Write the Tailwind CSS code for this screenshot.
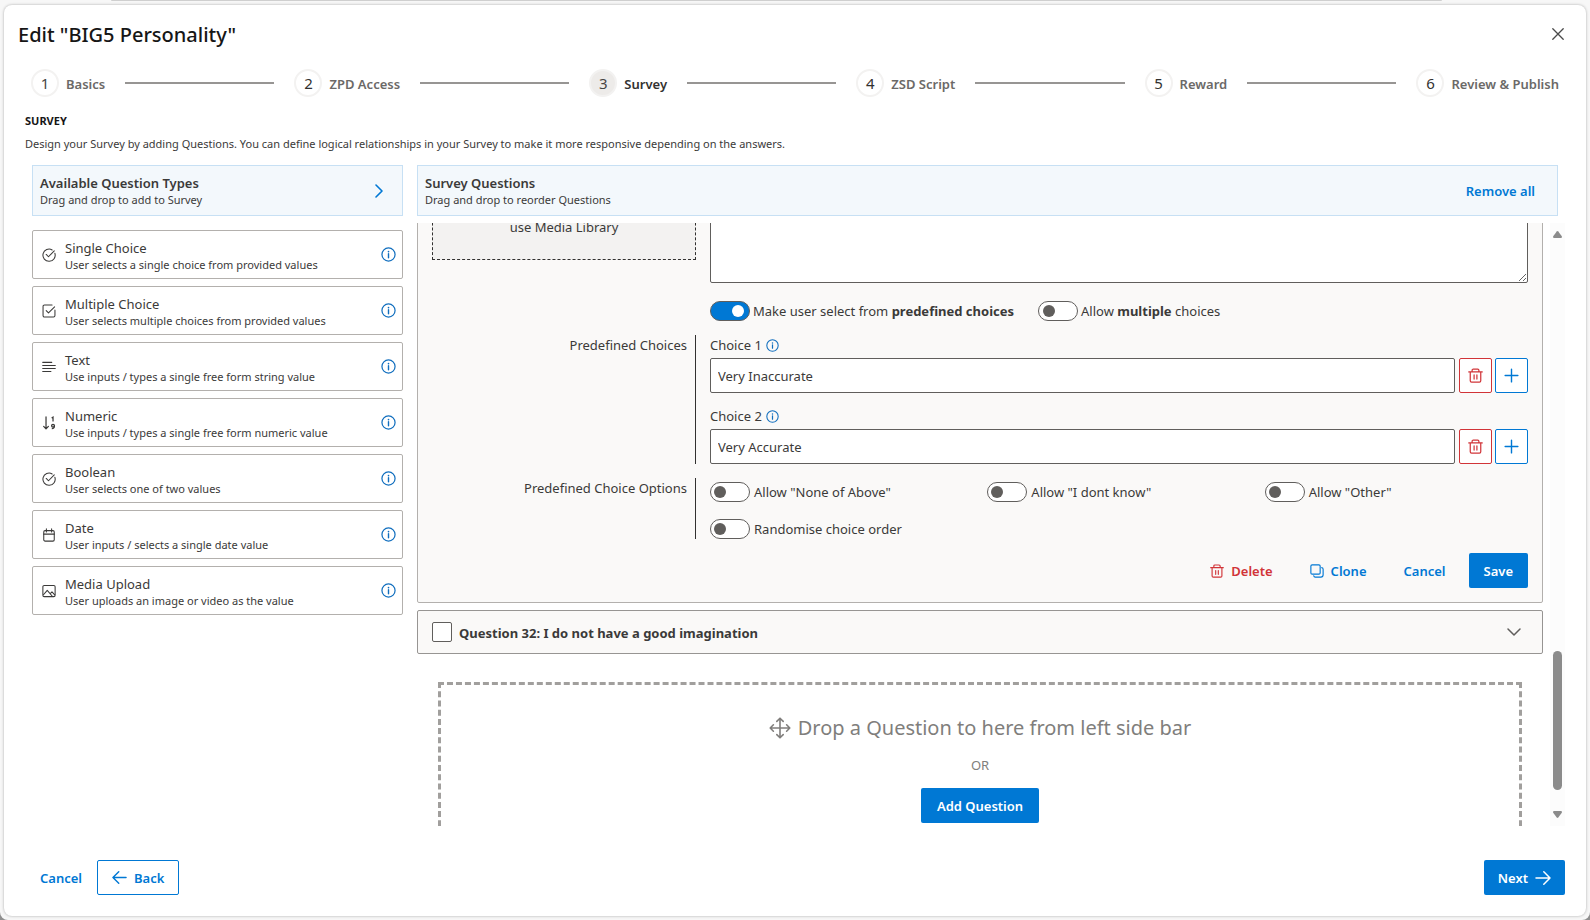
<!DOCTYPE html>
<html lang="en">
<head>
    <meta charset="UTF-8">
    <meta name="viewport" content="width=device-width, initial-scale=1.0">
    <title>Edit Survey</title>
    <script src="https://cdn.jsdelivr.net/npm/@tailwindcss/browser@4"></script>
</head>
<body class="bg-[#8f8f8f] font-['Noto_Sans','Open_Sans',sans-serif] text-[13px] leading-5 text-[#3b3a39]">

    <!-- Icons -->
    <svg class="hidden" fill="none" stroke="currentColor">
        <symbol id="i-info" viewBox="0 0 16 16">
            <circle cx="8" cy="8" r="7" fill="none" stroke="currentColor" stroke-width="1.3"/>
            <path d="M8 7.200v4.200" stroke="currentColor" stroke-width="1.5" stroke-linecap="round"/>
            <circle cx="8" cy="4.9" r=".9" fill="currentColor"/>
        </symbol>
        <symbol id="i-check-circle" viewBox="0 0 16 16">
            <path d="M11.6 2.2A7 7 0 1 0 14.7 6" fill="none" stroke="currentColor" stroke-width="1.2" stroke-linecap="round"/>
            <path d="M4.8 7.4 7.4 10 14 3.2" fill="none" stroke="currentColor" stroke-width="1.2" stroke-linecap="round" stroke-linejoin="round"/>
        </symbol>
        <symbol id="i-check-box" viewBox="0 0 16 16">
            <path d="M11.5 1.2H2.8A1.6 1.6 0 0 0 1.2 2.8v10.4a1.6 1.6 0 0 0 1.6 1.6h10.4a1.6 1.6 0 0 0 1.6-1.6V7" fill="none" stroke="currentColor" stroke-width="1.2" stroke-linecap="round"/>
            <path d="M4.8 7.6 7.4 10.2 14.4 3.2" fill="none" stroke="currentColor" stroke-width="1.2" stroke-linecap="round" stroke-linejoin="round"/>
        </symbol>
        <symbol id="i-text" viewBox="0 0 16 16">
            <path d="M.8 2.7h10.4M.8 6.2h14.4M.8 9.7h14.4M.8 13.2h9.4" fill="none" stroke="currentColor" stroke-width="1.2" stroke-linecap="round"/>
        </symbol>
        <symbol id="i-numeric" viewBox="0 0 16 16">
            <path d="M4.6 1v13.4M1.9 11.8l2.7 2.9 2.7-2.9" fill="none" stroke="currentColor" stroke-width="1.4" stroke-linecap="round" stroke-linejoin="round"/>
            <path d="M11 2.4l1.6-1.1v4.9" fill="none" stroke="currentColor" stroke-width="1.4"/>
            <circle cx="12.6" cy="11.2" r="1.6" fill="none" stroke="currentColor" stroke-width="1.5"/>
            <path d="M14.2 11.2c0 2-.9 3.3-3 3.2" fill="none" stroke="currentColor" stroke-width="1.5"/>
        </symbol>
        <symbol id="i-date" viewBox="0 0 16 16">
            <rect x="2" y="3" width="12" height="12" rx="1.5" fill="none" stroke="currentColor" stroke-width="1.2"/>
            <path d="M2 7h12M5 1v3.6M11 1v3.6" fill="none" stroke="currentColor" stroke-width="1.2" stroke-linecap="round"/>
        </symbol>
        <symbol id="i-image" viewBox="0 0 16 16">
            <rect x="1" y="1.6" width="14" height="12.8" rx="1.5" fill="none" stroke="currentColor" stroke-width="1.2"/>
            <path d="M1.4 12.6 6 7.2l5.8 6.8M9.4 11l2-2 3.4 3.6" fill="none" stroke="currentColor" stroke-width="1.2" stroke-linejoin="round"/>
        </symbol>
        <symbol id="i-trash" viewBox="0 0 16 16">
            <path d="M.8 4.2h14.4M4.4 4V2.3c0-.7.5-1.2 1.2-1.2h4.8c.7 0 1.2.5 1.2 1.2V4M2.4 4.4v9.2c0 .8.6 1.4 1.4 1.4h8.4c.8 0 1.4-.6 1.4-1.4V4.4M6.5 7.4v4.4M9.5 7.4v4.4" fill="none" stroke="currentColor" stroke-width="1.3" stroke-linecap="round"/>
        </symbol>
        <symbol id="i-plus" viewBox="0 0 16 16">
            <path d="M8 1.2v13.6M1.2 8h13.6" fill="none" stroke="currentColor" stroke-width="1.5" stroke-linecap="round"/>
        </symbol>
        <symbol id="i-clone" viewBox="0 0 16 16">
            <rect x="1" y="1" width="10.6" height="10.6" rx="1.4" fill="none" stroke="currentColor" stroke-width="1.3"/>
            <path d="M13.4 4.2c1 .2 1.6.9 1.6 1.8v6.4c0 1.4-1.2 2.6-2.6 2.6H6c-.9 0-1.6-.6-1.8-1.6" fill="none" stroke="currentColor" stroke-width="1.3" stroke-linecap="round"/>
        </symbol>
        <symbol id="i-arrow" viewBox="0 0 16 16">
            <path d="M1 8h14M8.8 1.8 15 8l-6.200 6.200" fill="none" stroke="currentColor" stroke-width="1.5" stroke-linecap="round" stroke-linejoin="round"/>
        </symbol>
        <symbol id="i-move" viewBox="0 0 22 22">
            <path d="M11 1.500v19M1.500 11h19M7.800 4.400 11 1.200l3.200 3.200M7.800 17.600l3.200 3.200 3.200-3.200M4.400 7.800 1.200 11l3.200 3.200M17.600 7.800l3.200 3.200-3.200 3.200" fill="none" stroke="currentColor" stroke-width="1.600" stroke-linecap="round" stroke-linejoin="round"/>
        </symbol>
    </svg>

    <div class="flex h-screen flex-col rounded-b-lg bg-[#f7f7f7] px-1 pb-1">
        <div class="mr-[144px] ml-[107px] h-px shrink-0 rounded-b bg-[#cfcfcf]"></div>

        <main class="mt-1 flex min-h-0 flex-1 flex-col rounded-lg bg-white pb-[21px] shadow-[0_0_3px_rgba(0,0,0,0.3)]">
            <!-- Header -->
            <header class="flex items-center justify-between pt-[14px] pr-[22px] pl-[14px]">
                <h1 class="pt-0.5 text-xl leading-7 font-medium text-[#161616]">Edit "BIG5 Personality"</h1>
                <button type="button" aria-label="Close" class="text-[#4a4a4a]">
                    <svg class="size-3" viewBox="0 0 12 12" fill="none" stroke="currentColor" stroke-width="1.3" stroke-linecap="round"><path d="M.8.8l10.400 10.400M11.200.8.8 11.200"/></svg>
                </button>
            </header>

            <!-- Steps -->
            <ol class="mt-5 flex items-center px-[27px] font-semibold text-[#6b6967]">
                <li class="flex items-center gap-[7px]">
                    <span class="grid size-7 place-items-center rounded-full border-2 border-[#f3f2f1] text-[15px] font-normal text-[#484644]">1</span><span class="pt-0.5">Basics</span>
                </li>
                <li class="mx-5 h-0.5 flex-1 bg-[#979593]" aria-hidden="true"></li>
                <li class="flex items-center gap-[7px]">
                    <span class="grid size-7 place-items-center rounded-full border-2 border-[#f3f2f1] text-[15px] font-normal text-[#323130]">2</span><span class="pt-0.5">ZPD Access</span>
                </li>
                <li class="mx-5 h-0.5 flex-1 bg-[#979593]" aria-hidden="true"></li>
                <li class="flex items-center gap-[7px] text-[#323130]" aria-current="step">
                    <span class="grid size-7 place-items-center rounded-full border-2 border-[#f3f2f1] bg-[#edebe9] text-[15px] font-normal text-[#484644]">3</span><span class="pt-0.5">Survey</span>
                </li>
                <li class="mx-5 h-0.5 flex-1 bg-[#979593]" aria-hidden="true"></li>
                <li class="flex items-center gap-[7px]">
                    <span class="grid size-7 place-items-center rounded-full border-2 border-[#f3f2f1] text-[15px] font-normal text-[#323130]">4</span><span class="pt-0.5">ZSD Script</span>
                </li>
                <li class="mx-5 h-0.5 flex-1 bg-[#979593]" aria-hidden="true"></li>
                <li class="flex items-center gap-[7px]">
                    <span class="grid size-7 place-items-center rounded-full border-2 border-[#f3f2f1] text-[15px] font-normal text-[#323130]">5</span><span class="pt-0.5">Reward</span>
                </li>
                <li class="mx-5 h-0.5 flex-1 bg-[#979593]" aria-hidden="true"></li>
                <li class="flex items-center gap-[7px]">
                    <span class="grid size-7 place-items-center rounded-full border-2 border-[#f3f2f1] text-[15px] font-normal text-[#323130]">6</span><span class="pt-0.5">Review &amp; Publish</span>
                </li>
            </ol>

            <div class="mt-4 px-[21px] text-[11px] leading-4">
                <h2 class="font-bold text-[#161616]">SURVEY</h2>
                <p class="mt-[7px]">Design your Survey by adding Questions. You can define logical relationships in your Survey to make it more responsive depending on the answers.</p>
            </div>

            <div class="mt-[13px] flex min-h-0 flex-1 gap-[14px] pr-[21px] pl-7">
                <!-- Question types -->
                <aside class="w-[371px] shrink-0">
                    <div class="flex h-[51px] items-center justify-between border border-[#c7e0f4] bg-[#f3f8fc] pr-[19px] pl-[7px]">
                        <div>
                            <h3 class="leading-[18px] font-semibold">Available Question Types</h3>
                            <p class="text-[11px] leading-4">Drag and drop to add to Survey</p>
                        </div>
                        <button type="button" aria-label="Collapse" class="text-[#0078d4]">
                            <svg class="h-[14px] w-2" viewBox="0 0 8 14" fill="none" stroke="currentColor" stroke-width="1.6" stroke-linecap="round" stroke-linejoin="round"><path d="M1 1l6 6-6 6"/></svg>
                        </button>
                    </div>

                    <ul class="mt-[14px] space-y-[7px]">
                        <li class="flex h-[49px] items-center rounded-xs border border-[#b3b0ad] pr-[6px] pl-[9px]">
                            <svg class="size-[14px]"><use href="#i-check-circle"/></svg>
                            <div class="ml-[9px] flex-1 pt-0.5"><h4 class="leading-[18px]">Single Choice</h4><p class="text-[11px] leading-4">User selects a single choice from provided values</p></div>
                            <svg class="size-[15px] text-[#106ebe]"><use href="#i-info"/></svg>
                        </li>
                        <li class="flex h-[49px] items-center rounded-xs border border-[#b3b0ad] pr-[6px] pl-[9px]">
                            <svg class="size-[14px]"><use href="#i-check-box"/></svg>
                            <div class="ml-[9px] flex-1 pt-0.5"><h4 class="leading-[18px]">Multiple Choice</h4><p class="text-[11px] leading-4">User selects multiple choices from provided values</p></div>
                            <svg class="size-[15px] text-[#106ebe]"><use href="#i-info"/></svg>
                        </li>
                        <li class="flex h-[49px] items-center rounded-xs border border-[#b3b0ad] pr-[6px] pl-[9px]">
                            <svg class="size-[14px]"><use href="#i-text"/></svg>
                            <div class="ml-[9px] flex-1 pt-0.5"><h4 class="leading-[18px]">Text</h4><p class="text-[11px] leading-4">Use inputs / types a single free form string value</p></div>
                            <svg class="size-[15px] text-[#106ebe]"><use href="#i-info"/></svg>
                        </li>
                        <li class="flex h-[49px] items-center rounded-xs border border-[#b3b0ad] pr-[6px] pl-[9px]">
                            <svg class="size-[14px]"><use href="#i-numeric"/></svg>
                            <div class="ml-[9px] flex-1 pt-0.5"><h4 class="leading-[18px]">Numeric</h4><p class="text-[11px] leading-4">Use inputs / types a single free form numeric value</p></div>
                            <svg class="size-[15px] text-[#106ebe]"><use href="#i-info"/></svg>
                        </li>
                        <li class="flex h-[49px] items-center rounded-xs border border-[#b3b0ad] pr-[6px] pl-[9px]">
                            <svg class="size-[14px]"><use href="#i-check-circle"/></svg>
                            <div class="ml-[9px] flex-1 pt-0.5"><h4 class="leading-[18px]">Boolean</h4><p class="text-[11px] leading-4">User selects one of two values</p></div>
                            <svg class="size-[15px] text-[#106ebe]"><use href="#i-info"/></svg>
                        </li>
                        <li class="flex h-[49px] items-center rounded-xs border border-[#b3b0ad] pr-[6px] pl-[9px]">
                            <svg class="size-[14px]"><use href="#i-date"/></svg>
                            <div class="ml-[9px] flex-1 pt-0.5"><h4 class="leading-[18px]">Date</h4><p class="text-[11px] leading-4">User inputs / selects a single date value</p></div>
                            <svg class="size-[15px] text-[#106ebe]"><use href="#i-info"/></svg>
                        </li>
                        <li class="flex h-[49px] items-center rounded-xs border border-[#b3b0ad] pr-[6px] pl-[9px]">
                            <svg class="size-[14px]"><use href="#i-image"/></svg>
                            <div class="ml-[9px] flex-1 pt-0.5"><h4 class="leading-[18px]">Media Upload</h4><p class="text-[11px] leading-4">User uploads an image or video as the value</p></div>
                            <svg class="size-[15px] text-[#106ebe]"><use href="#i-info"/></svg>
                        </li>
                    </ul>
                </aside>

                <!-- Survey questions -->
                <section class="flex min-w-0 flex-1 flex-col">
                    <div class="mr-[7px] flex h-[51px] shrink-0 items-center justify-between border border-[#c7e0f4] bg-[#f3f8fc] pr-[22px] pl-[7px]">
                        <div>
                            <h3 class="leading-[18px] font-semibold">Survey Questions</h3>
                            <p class="text-[11px] leading-4">Drag and drop to reorder Questions</p>
                        </div>
                        <button type="button" class="font-semibold text-[#0078d4]">Remove all</button>
                    </div>

                    <div class="mt-[7px] flex min-h-0 flex-1 gap-[7px] overflow-hidden">
                        <div class="-mt-10 min-w-0 flex-1">
                            <form class="rounded-xs border border-[#b3b0ad] bg-[#faf9f8] p-[14px]">
                                <div class="grid grid-cols-[264px_1fr] gap-x-[14px]">
                                    <div class="flex h-[62px] items-center justify-center border border-dashed border-[#323130] bg-[#f3f2f1] pb-1">use Media Library</div>
                                    <textarea aria-label="Question text" class="block h-[85px] w-full resize-y rounded-xs border border-[#605e5c] bg-white"></textarea>
                                </div>

                                <div class="mt-[18px] ml-[278px] flex gap-6">
                                    <label class="flex items-center gap-[3px]">
                                        <input type="checkbox" role="switch" checked class="peer sr-only">
                                        <span class="flex h-5 w-10 items-center rounded-full border border-[#605e5c] bg-white px-[3px] peer-checked:justify-end peer-checked:bg-[#0078d4] peer-checked:px-[5px] peer-checked:[&>i]:bg-white"><i class="size-3 rounded-full bg-[#605e5c]"></i></span>
                                        <span>Make user select from <b>predefined choices</b></span>
                                    </label>
                                    <label class="flex items-center gap-[3px]">
                                        <input type="checkbox" role="switch" class="peer sr-only">
                                        <span class="flex h-5 w-10 items-center rounded-full border border-[#605e5c] bg-white px-1"><i class="size-3 rounded-full bg-[#605e5c]"></i></span>
                                        <span>Allow <b>multiple</b> choices</span>
                                    </label>
                                </div>

                                <div class="mt-[14px] grid grid-cols-[264px_1fr] gap-x-[14px]">
                                    <div class="border-r border-[#323130] pr-2 text-right">Predefined Choices</div>
                                    <div class="space-y-[13px]">
                                        <div>
                                            <label for="choice1" class="flex items-center gap-1">Choice 1 <svg class="size-[13px] text-[#106ebe]"><use href="#i-info"/></svg></label>
                                            <div class="mt-[3px] flex h-[35px]">
                                                <input id="choice1" type="text" value="Very Inaccurate" class="min-w-0 flex-1 rounded-xs border border-[#605e5c] bg-white px-[7px]">
                                                <button type="button" aria-label="Delete choice 1" class="ml-1 grid w-[33px] place-items-center rounded-xs border border-[#d13438] bg-white text-[#d13438]"><svg class="size-[15px]"><use href="#i-trash"/></svg></button>
                                                <button type="button" aria-label="Add choice after 1" class="ml-[3px] grid w-[33px] place-items-center rounded-xs border border-[#0078d4] bg-white text-[#0078d4]"><svg class="size-[15px]"><use href="#i-plus"/></svg></button>
                                            </div>
                                        </div>
                                        <div>
                                            <label for="choice2" class="flex items-center gap-1">Choice 2 <svg class="size-[13px] text-[#106ebe]"><use href="#i-info"/></svg></label>
                                            <div class="mt-[3px] flex h-[35px]">
                                                <input id="choice2" type="text" value="Very Accurate" class="min-w-0 flex-1 rounded-xs border border-[#605e5c] bg-white px-[7px]">
                                                <button type="button" aria-label="Delete choice 2" class="ml-1 grid w-[33px] place-items-center rounded-xs border border-[#d13438] bg-white text-[#d13438]"><svg class="size-[15px]"><use href="#i-trash"/></svg></button>
                                                <button type="button" aria-label="Add choice after 2" class="ml-[3px] grid w-[33px] place-items-center rounded-xs border border-[#0078d4] bg-white text-[#0078d4]"><svg class="size-[15px]"><use href="#i-plus"/></svg></button>
                                            </div>
                                        </div>
                                    </div>
                                </div>

                                <div class="mt-[14px] grid grid-cols-[264px_1fr] gap-x-[14px]">
                                    <div class="border-r border-[#323130] pr-2 text-right">Predefined Choice Options</div>
                                    <div class="grid grid-cols-3 gap-x-[14px] gap-y-[17px] pt-1">
                                        <label class="flex items-center gap-1">
                                            <input type="checkbox" role="switch" class="peer sr-only">
                                            <span class="flex h-5 w-10 items-center rounded-full border border-[#605e5c] bg-white px-[3px]"><i class="size-3 rounded-full bg-[#605e5c]"></i></span>
                                            Allow "None of Above"
                                        </label>
                                        <label class="flex items-center gap-1">
                                            <input type="checkbox" role="switch" class="peer sr-only">
                                            <span class="flex h-5 w-10 items-center rounded-full border border-[#605e5c] bg-white px-[3px]"><i class="size-3 rounded-full bg-[#605e5c]"></i></span>
                                            Allow "I dont know"
                                        </label>
                                        <label class="flex items-center gap-1">
                                            <input type="checkbox" role="switch" class="peer sr-only">
                                            <span class="flex h-5 w-10 items-center rounded-full border border-[#605e5c] bg-white px-[3px]"><i class="size-3 rounded-full bg-[#605e5c]"></i></span>
                                            Allow "Other"
                                        </label>
                                        <label class="flex items-center gap-1">
                                            <input type="checkbox" role="switch" class="peer sr-only">
                                            <span class="flex h-5 w-10 items-center rounded-full border border-[#605e5c] bg-white px-[3px]"><i class="size-3 rounded-full bg-[#605e5c]"></i></span>
                                            Randomise choice order
                                        </label>
                                    </div>
                                </div>

                                <div class="mt-[14px] flex h-[35px] justify-end gap-[9px] font-semibold text-[#0078d4]">
                                    <button type="button" class="flex items-center gap-[7px] px-[14px] text-[#d13438]"><svg class="size-[14px]"><use href="#i-trash"/></svg>Delete</button>
                                    <button type="button" class="flex items-center gap-[7px] px-[14px]"><svg class="size-[14px]"><use href="#i-clone"/></svg>Clone</button>
                                    <button type="button" class="px-[14px]">Cancel</button>
                                    <button type="button" class="rounded-xs bg-[#0078d4] px-[15px] text-white">Save</button>
                                </div>
                            </form>

                            <div class="mt-[7px] flex h-11 items-center rounded-xs border border-[#979593] bg-[#faf9f8] pr-[21px] pl-[14px]">
                                <input id="q32" type="checkbox" class="size-5 appearance-none rounded-xs border border-[#605e5c] bg-white checked:bg-[#0078d4]">
                                <label for="q32" class="ml-[7px] flex-1 pt-0.5 font-bold">Question 32: I do not have a good imagination</label>
                                <button type="button" aria-label="Expand question 32" class="text-[#605e5c]">
                                    <svg class="h-2 w-[14px]" viewBox="0 0 14 8" fill="none" stroke="currentColor" stroke-width="1.5" stroke-linecap="round" stroke-linejoin="round"><path d="M1 1l6 6 6-6"/></svg>
                                </button>
                            </div>

                            <div class="mx-[21px] mt-7 flex flex-col items-center border-3 border-dashed border-[#a19f9d] pt-7 pb-7 text-[#807e7c]">
                                <p class="flex items-center gap-[7px] text-xl leading-[30px]"><svg class="size-[22px]"><use href="#i-move"/></svg>Drop a Question to here from left side bar</p>
                                <p class="mt-3">OR</p>
                                <button type="button" class="mt-[13px] h-[35px] rounded-xs bg-[#0078d4] px-4 font-semibold text-white">Add Question</button>
                            </div>
                        </div>

                        <!-- Scrollbar -->
                        <div class="flex w-[15px] shrink-0 flex-col items-center bg-[#fcfcfc] py-2 text-[#8b8b8b]" aria-hidden="true">
                            <svg class="h-[7px] w-[9px]" viewBox="0 0 9 7" fill="currentColor"><path d="M3.700.5Q4.500-.4 5.300.5L8.800 5.200Q9.300 7 8 7H1Q-.3 7 .2 5.200z"/></svg>
                            <div class="flex-[413]"></div>
                            <div class="flex-[139] w-[9px] rounded-full bg-[#8b8b8b]"></div>
                            <div class="flex-[21]"></div>
                            <svg class="h-[7px] w-[9px] rotate-180" viewBox="0 0 9 7" fill="currentColor"><path d="M3.700.5Q4.500-.4 5.300.5L8.800 5.200Q9.300 7 8 7H1Q-.3 7 .2 5.200z"/></svg>
                        </div>
                    </div>
                </section>
            </div>

            <!-- Footer -->
            <footer class="mt-[34px] flex h-[35px] shrink-0 pr-[21px] pl-[22px] font-semibold text-[#0078d4]">
                <button type="button" class="px-[14px]">Cancel</button>
                <button type="button" class="ml-px flex items-center gap-[7px] rounded-xs border border-[#0078d4] px-[14px]"><svg class="size-[15px] rotate-180"><use href="#i-arrow"/></svg>Back</button>
                <button type="button" class="ml-auto flex items-center gap-[7px] rounded-xs bg-[#0078d4] px-[14px] text-white">Next<svg class="size-4"><use href="#i-arrow"/></svg></button>
            </footer>
        </main>
    </div>
</body>
</html>
